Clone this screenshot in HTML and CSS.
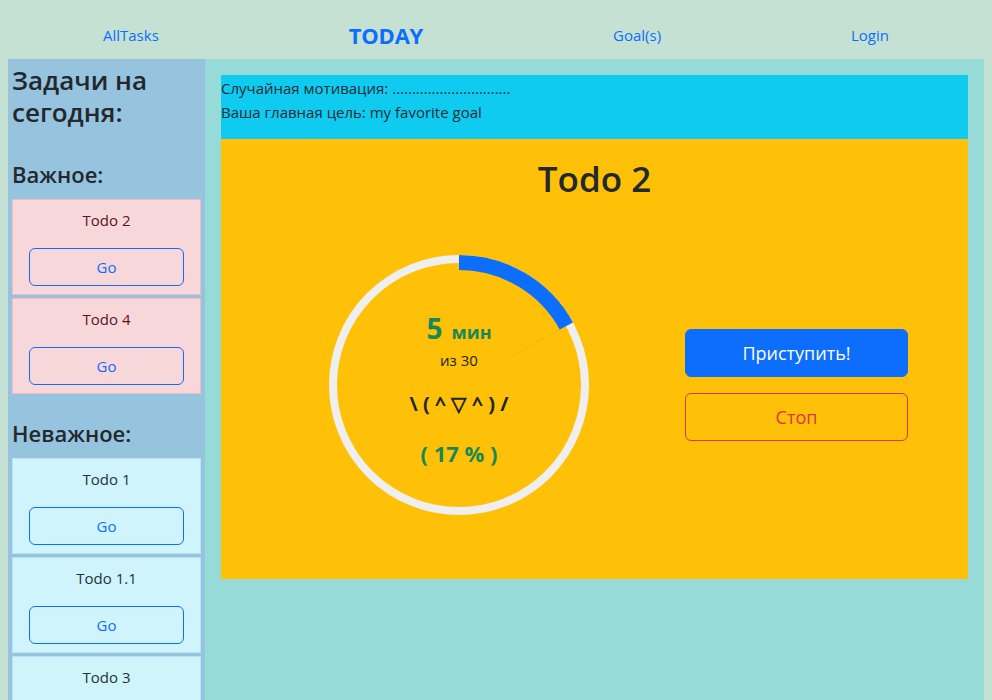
FILE: index.html
```html
<!DOCTYPE html>
<html lang="ru">
<head>
<meta charset="utf-8">
<title>TODAY</title>
<link rel="stylesheet" href="styles.css">
</head>
<body>
<header class="topnav">
  <a class="navlink" href="#">AllTasks</a>
  <a class="navlink brand" href="#">TODAY</a>
  <a class="navlink" href="#">Goal(s)</a>
  <a class="navlink" href="#">Login</a>
</header>
<div class="layout">
  <aside class="sidebar">
    <h3 class="side-title">Задачи на сегодня:</h3>
    <h4 class="group-title">Важное:</h4>
    <div class="task task-important">
      <div class="task-name">Todo 2</div>
      <button class="btn-go">Go</button>
    </div>
    <div class="task task-important">
      <div class="task-name">Todo 4</div>
      <button class="btn-go">Go</button>
    </div>
    <h4 class="group-title group-next">Неважное:</h4>
    <div class="task task-minor">
      <div class="task-name">Todo 1</div>
      <button class="btn-go">Go</button>
    </div>
    <div class="task task-minor">
      <div class="task-name">Todo 1.1</div>
      <button class="btn-go">Go</button>
    </div>
    <div class="task task-minor">
      <div class="task-name">Todo 3</div>
      <button class="btn-go">Go</button>
    </div>
  </aside>
  <main class="main">
    <div class="info">
      <div>Случайная мотивация: ..............................</div>
      <div>Ваша главная цель: my favorite goal</div>
    </div>
    <section class="focus">
      <h1 class="focus-title">Todo 2</h1>
      <div class="focus-row">
        <div class="timer">
          <svg class="ring" width="260" height="260" viewBox="0 0 260 260">
            <circle cx="130" cy="130" r="126" fill="none" stroke="#efefef" stroke-width="8"/>
            <circle cx="130" cy="130" r="122.5" fill="none" stroke="#0d6efd" stroke-width="15" pathLength="100" stroke-dasharray="17 83" transform="rotate(-90 130 130)"/>
            <line x1="230.8" y1="74.6" x2="180.8" y2="102.1" stroke="rgba(120,90,0,0.18)" stroke-width="1" stroke-dasharray="1 1"/>
          </svg>
          <div class="timer-text">
            <div class="mins"><span class="mins-num">5</span><span class="mins-unit">мин</span></div>
            <div class="of">из 30</div>
            <div class="face">\ ( ^ ▽ ^ ) /</div>
            <div class="pct">( 17 % )</div>
          </div>
        </div>
        <div class="actions">
          <button class="btn-start">Приступить!</button>
          <button class="btn-stop">Стоп</button>
        </div>
      </div>
    </section>
  </main>
</div>
</body>
</html>
```

FILE: styles.css
```css
* { box-sizing: border-box; }
html, body { margin: 0; }
body {
  padding: 0 8px;
  background: #c5e1d3;
  font-family: "Open Sans", "Noto Sans", sans-serif;
  font-size: 16px;
  line-height: 1.5;
  color: #212529;
}
.topnav {
  height: 59px;
  padding-top: 12px;
  display: flex;
  justify-content: space-around;
  align-items: center;
}
.navlink {
  color: #0d6efd;
  text-decoration: none;
  font-size: 15px;
}
.navlink.brand {
  font-size: 22px;
  font-weight: 700;
  letter-spacing: -0.2px;
}
.layout {
  display: flex;
  min-height: 660px;
}
.sidebar {
  width: 197px;
  flex: none;
  background: #96c3dd;
  padding: 5px 4px 0;
  display: flex;
  flex-direction: column;
}
.side-title {
  margin: 0;
  font-size: 26px;
  font-weight: 600;
  line-height: 32px;
  color: #23282d;
}
.group-title {
  margin: 32px 0 11px;
  font-size: 22px;
  font-weight: 600;
  line-height: 28px;
  color: #23282d;
}
.group-title.group-next { margin-top: 22px; }
.task {
  height: 96px;
  border: 1px solid;
  padding: 8px 16px;
  margin-bottom: 3px;
  display: flex;
  flex-direction: column;
  align-items: stretch;
  flex: none;
}
.task-important { background: #f8d7da; border-color: #f1bcc1; color: #58151c; }
.task-minor { background: #cff4fc; border-color: #b6e6f2; color: #1f3338; }
.task-name {
  text-align: center;
  font-size: 15px;
  line-height: 24px;
  margin-bottom: 16px;
}
.btn-go {
  height: 38px;
  background: transparent;
  border: 1px solid #0d6efd;
  border-radius: 6px;
  color: #0d6efd;
  font-family: inherit;
  font-size: 15px;
}
.main {
  flex: 1;
  background: #97dbd9;
  padding: 16px;
}
.info {
  background: #10cbf0;
  padding: 1px 0 15px;
  font-size: 15px;
  line-height: 24px;
  color: #1c2b36;
}
.focus {
  background: #ffc107;
  padding: 18px 0 64px;
}
.focus-title {
  margin: 0 0 54px;
  text-align: center;
  font-size: 35px;
  font-weight: 600;
  line-height: 44px;
  color: #23282d;
}
.focus-row {
  display: flex;
  align-items: center;
  padding-left: 108px;
  gap: 96px;
}
.timer {
  display: grid;
  width: 260px;
  height: 260px;
  flex: none;
}
.ring, .timer-text { grid-area: 1 / 1; }
.timer-text {
  display: flex;
  flex-direction: column;
  align-items: center;
  padding-top: 55px;
  text-align: center;
}
.mins {
  color: #198754;
  font-weight: 700;
  line-height: 36px;
  height: 36px;
}
.mins-num { font-size: 28px; margin-right: 9px; }
.mins-unit { font-size: 18px; }
.of {
  margin-top: 4px;
  font-size: 15px;
  line-height: 20px;
}
.face {
  margin-top: 20px;
  font-size: 20px;
  font-weight: 700;
  line-height: 28px;
}
.pct {
  margin-top: 20px;
  color: #198754;
  font-size: 22px;
  font-weight: 700;
  line-height: 30px;
}
.actions {
  width: 223px;
  flex: none;
  display: flex;
  flex-direction: column;
  gap: 16px;
}
.btn-start, .btn-stop {
  height: 48px;
  border-radius: 6px;
  font-family: inherit;
  font-size: 18px;
  border: 1px solid;
}
.btn-start { background: #0d6efd; border-color: #0d6efd; color: #fff; }
.btn-stop { background: transparent; border-color: #dc3545; color: #dc3545; }
```
